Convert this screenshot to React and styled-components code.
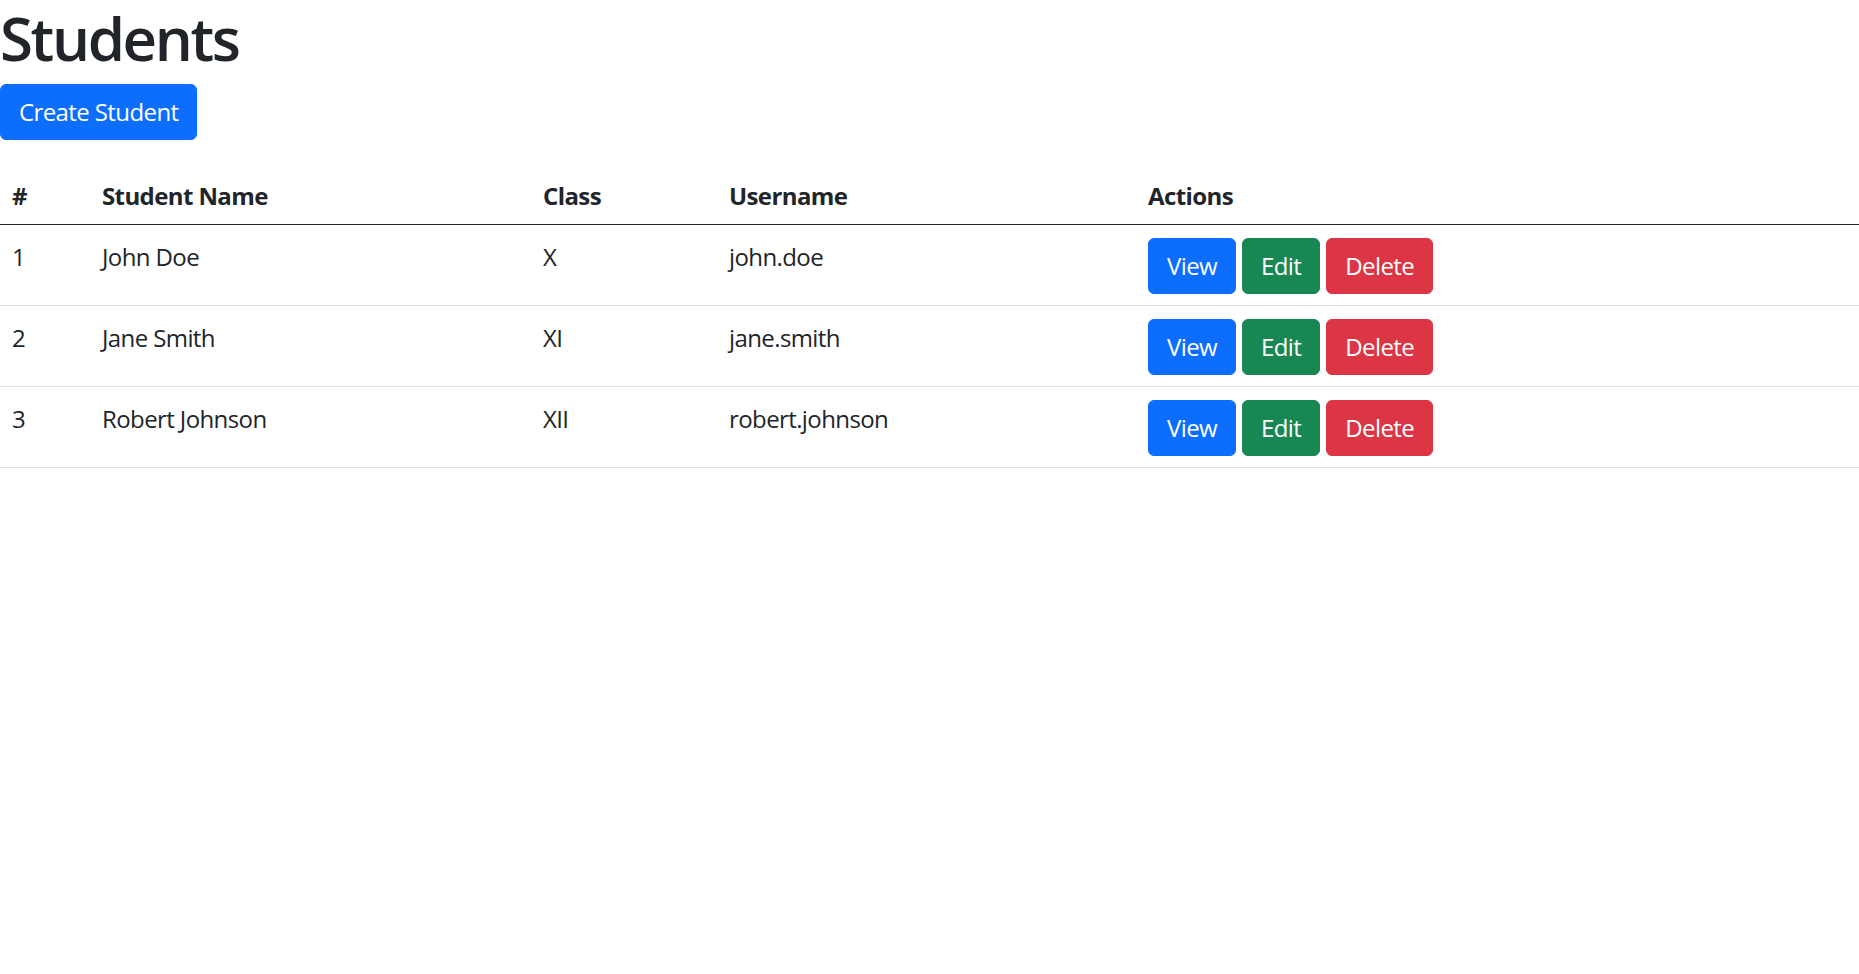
import React from "react";
import styled, { createGlobalStyle } from "styled-components";

const GlobalStyle = createGlobalStyle`
  body {
    margin: 0;
    font-family: "Open Sans", "Noto Sans", sans-serif;
    font-size: 24px;
    line-height: 1.5;
    letter-spacing: -0.6px;
    color: #212529;
    background: #fff;
  }
  * {
    box-sizing: border-box;
  }
`;

const Page = styled.div`
  display: flex;
  flex-direction: column;
  align-items: flex-start;
`;

const Title = styled.h1`
  margin: 2px 0 10px;
  font-size: 60px;
  font-weight: 600;
  line-height: 1.2;
  letter-spacing: -2.4px;
`;

const Button = styled.button`
  display: inline-block;
  font-family: inherit;
  font-size: 24px;
  line-height: 36px;
  letter-spacing: -0.6px;
  padding: 9px 18px;
  border: 1px solid ${(p) => p.color};
  border-radius: 6px;
  background: ${(p) => p.color};
  color: #fff;
  cursor: pointer;
`;

const Table = styled.table`
  width: 100%;
  margin-top: 24px;
  border-collapse: collapse;
  table-layout: fixed;
`;

const Th = styled.th`
  text-align: left;
  font-weight: 700;
  padding: 14px 12px 10px;
  width: ${(p) => p.w || "auto"};
  border-bottom: 1.5px solid #212529;
`;

const Row = styled.tr`
  border-bottom: 1px solid #dee2e6;
`;

const Td = styled.td`
  padding: ${(p) => (p.actions ? "13px 12px 11px" : "14px 12px 10px")};
  vertical-align: top;
`;

const Actions = styled.div`
  display: flex;
  gap: 6px;
`;

const students = [
  { id: 1, name: "John Doe", cls: "X", username: "john.doe" },
  { id: 2, name: "Jane Smith", cls: "XI", username: "jane.smith" },
  { id: 3, name: "Robert Johnson", cls: "XII", username: "robert.johnson" },
];

function App() {
  return (
    <Page>
      <GlobalStyle />
      <Title>Students</Title>
      <Button color="#0d6efd">Create Student</Button>
      <Table>
        <thead>
          <tr>
            <Th w="90px">#</Th>
            <Th w="441px">Student Name</Th>
            <Th w="186px">Class</Th>
            <Th w="419px">Username</Th>
            <Th>Actions</Th>
          </tr>
        </thead>
        <tbody>
          {students.map((s) => (
            <Row key={s.id}>
              <Td>{s.id}</Td>
              <Td>{s.name}</Td>
              <Td>{s.cls}</Td>
              <Td>{s.username}</Td>
              <Td actions>
                <Actions>
                  <Button color="#0d6efd">View</Button>
                  <Button color="#198754">Edit</Button>
                  <Button color="#dc3545">Delete</Button>
                </Actions>
              </Td>
            </Row>
          ))}
        </tbody>
      </Table>
    </Page>
  );
}

export default App;
